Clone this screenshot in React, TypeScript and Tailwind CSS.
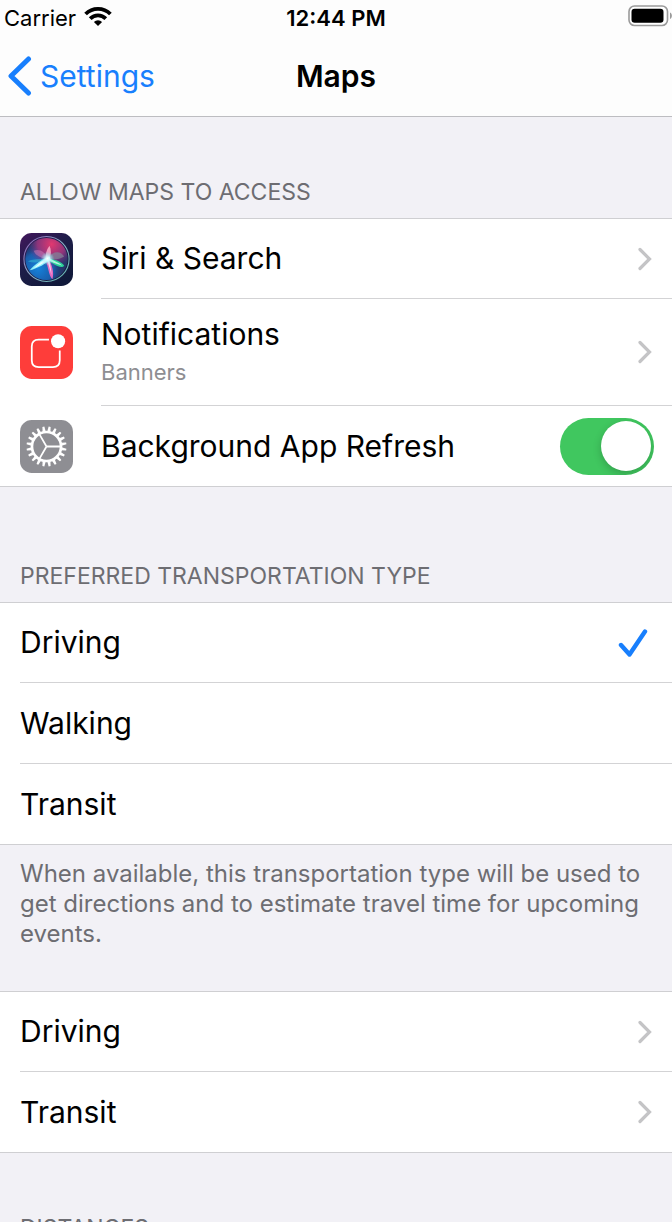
import { useState, type ReactNode } from "react";

const gearTeeth = Array.from({ length: 20 }, (_, i) => i * 18);

function WifiIcon() {
  return (
    <svg viewBox="0 0 28 20" className="mb-1 h-5 w-7" aria-hidden="true">
      <g fill="none" stroke="#000" strokeWidth="3.8">
        <path d="M1.6 8 A17.5 17.5 0 0 1 26.4 8" />
        <path d="M6.2 12.7 A11 11 0 0 1 21.8 12.7" />
      </g>
      <path d="M14 20 L9.9 16 A5.9 5.9 0 0 1 18.1 16 Z" fill="#000" />
    </svg>
  );
}

function BatteryIcon() {
  return (
    <svg viewBox="0 0 44 22" className="mb-1 h-[22px] w-11" aria-hidden="true">
      <rect x="1" y="1" width="38.500" height="19.500" rx="5.500" fill="#fff" stroke="#9a9a9a" strokeWidth="1.600" />
      <rect x="3.500" y="3.700" width="32" height="14" rx="3.200" fill="#000" />
      <path d="M42 7.500 C44.500 8.500 44.500 13 42 14 Z" fill="#9a9a9a" />
    </svg>
  );
}

function SiriIcon() {
  return (
    <svg viewBox="0 0 54 54" className="size-[53px] shrink-0" aria-hidden="true">
      <defs>
        <linearGradient id="siriBg" x1="0" y1="0" x2="0.7" y2="1">
          <stop offset="0" stopColor="#42175c" />
          <stop offset="0.5" stopColor="#1d1d48" />
          <stop offset="1" stopColor="#10193a" />
        </linearGradient>
        <linearGradient id="siriRing" x1="0" y1="0" x2="1" y2="1">
          <stop offset="0" stopColor="#8a5bb5" />
          <stop offset="0.5" stopColor="#8fb0c9" />
          <stop offset="1" stopColor="#5bb5ac" />
        </linearGradient>
        <radialGradient id="siriPink" cx="0.62" cy="0.15" r="0.55">
          <stop offset="0" stopColor="#e2386f" />
          <stop offset="0.6" stopColor="#a8347e" stopOpacity="0.8" />
          <stop offset="1" stopColor="#7a2d88" stopOpacity="0" />
        </radialGradient>
        <radialGradient id="siriBlue" cx="0.3" cy="0.72" r="0.6">
          <stop offset="0" stopColor="#1583dc" />
          <stop offset="0.6" stopColor="#1768bd" stopOpacity="0.8" />
          <stop offset="1" stopColor="#1a3577" stopOpacity="0" />
        </radialGradient>
        <radialGradient id="siriGlow">
          <stop offset="0" stopColor="#fff" />
          <stop offset="0.35" stopColor="#c9fbff" stopOpacity="0.8" />
          <stop offset="1" stopColor="#6bdcf0" stopOpacity="0" />
        </radialGradient>
        <filter id="siriSoft" x="-20%" y="-20%" width="140%" height="140%">
          <feGaussianBlur stdDeviation="0.7" />
        </filter>
      </defs>
      <rect width="54" height="54" rx="12" fill="url(#siriBg)" />
      <circle cx="27" cy="26.500" r="21.500" fill="#253669" />
      <circle cx="27" cy="26.500" r="21.500" fill="url(#siriBlue)" />
      <circle cx="27" cy="26.500" r="21.500" fill="url(#siriPink)" />
      <g filter="url(#siriSoft)">
        <path d="M28 27 C20 25 15 22 14 18 C20 16 26 19 28 27Z" fill="#d080b8" opacity="0.5" />
        <path d="M28 27 C18 26 12 27 8 29 C14 31 22 30 28 27Z" fill="#37bad3" opacity="0.55" />
        <path d="M27 26 C25 21 28 16 30 13 C32 17 32 22 30 26Z" fill="#ffb5d0" opacity="0.8" />
        <path d="M28 26 C34 18 41 18 45 24 C40 27 34 28 28 26Z" fill="#7f8798" opacity="0.7" />
        <path d="M27 26 C34 26 42 29 45 33 C43 37 34 33 27 26Z" fill="#2bcf99" />
        <path d="M28 25 C33 32 35 41 33 47 C29 43 29 34 26 28Z" fill="#e36bc0" />
        <path d="M30 24 C23 26 14 33 10 38 C18 36 27 31 31 27Z" fill="#8df1fb" />
        <path d="M30 24 C24 27 18 32 14 36 C20 33 27 29 31 27Z" fill="#fff" opacity="0.8" />
        <path d="M27 26 C29 32 31 38 32 43 C32 38 31 33 30 28Z" fill="#fff" opacity="0.7" />
        <path d="M28 25 C34 28 39 30 43 33 C37 32 31 29 27 27Z" fill="#d5fff0" opacity="0.8" />
      </g>
      <circle cx="28" cy="26" r="7" fill="url(#siriGlow)" />
      <circle cx="27" cy="26.500" r="23" fill="none" stroke="url(#siriRing)" strokeWidth="1.100" />
    </svg>
  );
}

function NotificationsIcon() {
  return (
    <svg viewBox="0 0 54 54" className="size-[53px] shrink-0" aria-hidden="true">
      <rect width="54" height="54" rx="12" fill="#fe3d3a" />
      <path
        d="M29.500 14 H19 Q12 14 12 21 V35 Q12 42 19 42 H33.500 Q40.500 42 40.500 35 V25"
        fill="none"
        stroke="#fff"
        strokeWidth="1.800"
      />
      <circle cx="38.800" cy="15.500" r="7.200" fill="#fff" />
    </svg>
  );
}

function GearIcon() {
  return (
    <svg viewBox="0 0 54 54" className="size-[53px] shrink-0" aria-hidden="true">
      <rect width="54" height="54" rx="12" fill="#8e8e93" />
      <g fill="#fff">
        {gearTeeth.map((angle) => (
          <path key={angle} d="M25.300 12.500 L26 6.600 H28 L28.700 12.500 Z" transform={`rotate(${angle + 9} 27 27)`} />
        ))}
      </g>
      <g fill="none" stroke="#fff">
        <circle cx="27" cy="27" r="14.800" strokeWidth="2.700" />
        <path d="M27 27 H41 M27 27 L20 14.900 M27 27 L20 39.100" strokeWidth="1.800" />
      </g>
    </svg>
  );
}

function Chevron() {
  return (
    <svg viewBox="0 0 14 24" className="mr-5 h-6 w-3.5 shrink-0" aria-hidden="true">
      <path d="M2 2.500 L11.500 12 L2 21.500" fill="none" stroke="#c4c4c6" strokeWidth="3.200" strokeLinecap="round" strokeLinejoin="miter" />
    </svg>
  );
}

function List({ children }: { children: ReactNode }) {
  return <ul className="border-t border-[#cfcfd2] bg-white">{children}</ul>;
}

const itemClass = "group flex border-[#cfcfd2] pl-5 last:border-b";
const bodyClass =
  "flex min-h-[81px] min-w-0 flex-1 items-center justify-between border-b border-[#d3d3d5] group-first:min-h-20 group-last:min-h-20 group-last:border-b-0";

function LinkRow({ title, detail, icon }: { title: string; detail?: string; icon?: ReactNode }) {
  return (
    <li className={itemClass}>
      <a href="#" className="flex min-w-0 flex-1 items-center">
        {icon && <span className="w-[81px] shrink-0">{icon}</span>}
        <span className={bodyClass}>
          {detail ? (
            <span className="flex flex-col pt-[14px] pb-4">
              <span className="leading-[42px]">{title}</span>
              <span className="text-[22px] leading-[34px] text-[#8e8e92]">{detail}</span>
            </span>
          ) : (
            <span>{title}</span>
          )}
          <Chevron />
        </span>
      </a>
    </li>
  );
}

function SectionTitle({ children }: { children: ReactNode }) {
  return <h2 className="px-5 pt-[60px] pb-[11px] text-[23px] leading-[30px] text-[#6d6d72]">{children}</h2>;
}

export default function App() {
  const [refresh, setRefresh] = useState(true);
  const [mode, setMode] = useState("Driving");

  return (
    <div className="h-screen overflow-hidden bg-[#f2f1f6] font-['Inter','Liberation_Sans',sans-serif] text-[30px] text-black">
      <header className="border-b border-[#bdbdc1] bg-[#fdfdfd]">
        <div className="grid h-9 grid-cols-3 items-center text-[22px] leading-8">
          <div className="flex items-center gap-2 pl-1">
            <span>Carrier</span>
            <WifiIcon />
          </div>
          <time className="text-center font-semibold">12:44 PM</time>
          <div className="flex justify-end">
            <BatteryIcon />
          </div>
        </div>
        <nav className="grid h-20 grid-cols-3 items-center">
          <a href="#" className="flex items-center gap-2 pl-2 text-[#187ffd]">
            <svg viewBox="0 0 24 40" className="h-10 w-6" aria-hidden="true">
              <path d="M20.500 3 L3 20 L20.500 37" fill="none" stroke="currentColor" strokeWidth="5" strokeLinecap="round" strokeLinejoin="round" />
            </svg>
            <span>Settings</span>
          </a>
          <h1 className="text-center font-semibold">Maps</h1>
        </nav>
      </header>

      <main>
        <section>
          <SectionTitle>ALLOW MAPS TO ACCESS</SectionTitle>
          <List>
            <LinkRow title="Siri & Search" icon={<SiriIcon />} />
            <LinkRow title="Notifications" detail="Banners" icon={<NotificationsIcon />} />
            <li className={itemClass}>
              <label className="flex min-w-0 flex-1 items-center">
                <span className="w-[81px] shrink-0">
                  <GearIcon />
                </span>
                <span className={bodyClass}>
                  <span>Background App Refresh</span>
                  <input
                    type="checkbox"
                    role="switch"
                    checked={refresh}
                    onChange={(e) => setRefresh(e.target.checked)}
                    className="mr-[18px] flex h-[57px] w-[94px] shrink-0 appearance-none items-center overflow-hidden rounded-full bg-[#e9e9eb] px-[3px] before:size-[50px] before:rounded-full before:bg-white before:shadow-[0_3px_8px_rgba(0,0,0,0.2)] checked:justify-end checked:bg-[#40c75f]"
                  />
                </span>
              </label>
            </li>
          </List>
        </section>

        <section className="mt-[14px]">
          <SectionTitle>PREFERRED TRANSPORTATION TYPE</SectionTitle>
          <List>
            {["Driving", "Walking", "Transit"].map((name) => (
              <li key={name} className={itemClass}>
                <label className={bodyClass}>
                  <span>{name}</span>
                  <input
                    type="radio"
                    name="transport"
                    value={name}
                    checked={mode === name}
                    onChange={() => setMode(name)}
                    className="peer sr-only"
                  />
                  <svg viewBox="0 0 30 30" className="invisible mr-6 size-[30px] peer-checked:visible" aria-hidden="true">
                    <path d="M3 17 L11.500 26.500 L27 3.500" fill="none" stroke="#187ffd" strokeWidth="4.400" strokeLinecap="round" strokeLinejoin="round" />
                  </svg>
                </label>
              </li>
            ))}
          </List>
          <p className="px-5 pt-[14px] text-[24px] leading-[30px] text-[#6d6d72]">
            When available, this transportation type will be used to get directions and to estimate travel time for upcoming
            events.
          </p>
        </section>

        <section className="mt-[42px]">
          <List>
            <LinkRow title="Driving" />
            <LinkRow title="Transit" />
          </List>
        </section>

        <section>
          <SectionTitle>DISTANCES</SectionTitle>
        </section>
      </main>
    </div>
  );
}
